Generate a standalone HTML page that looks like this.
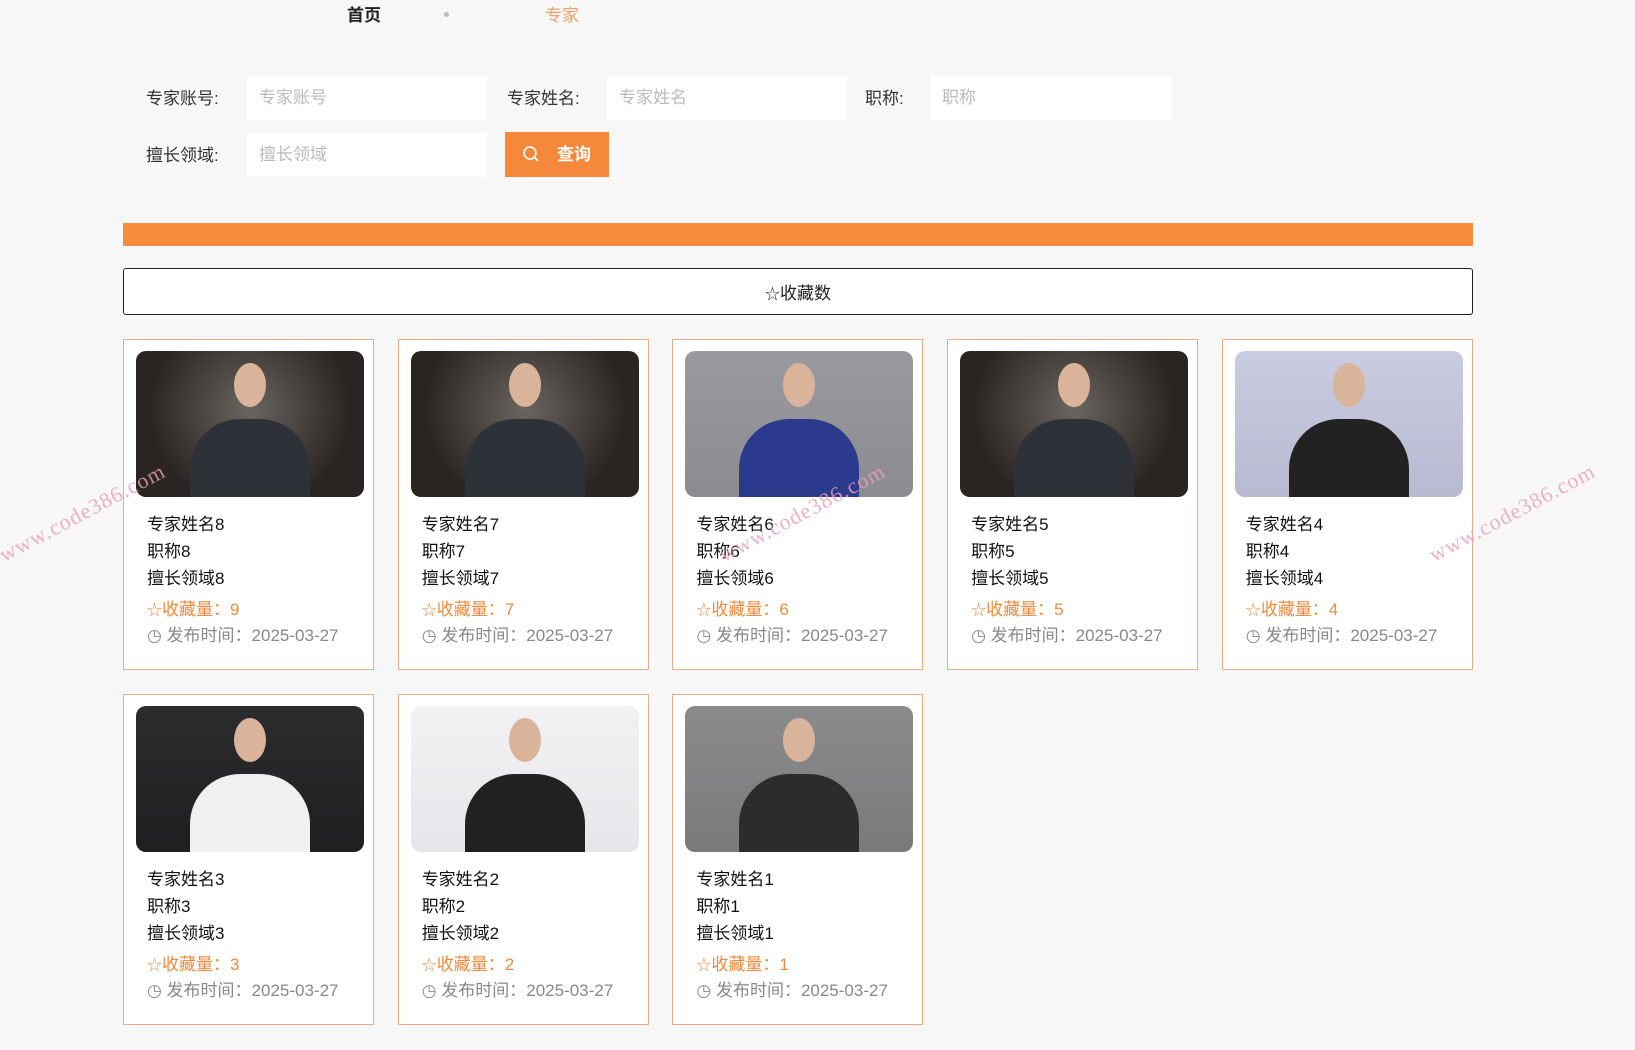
<!DOCTYPE html>
<html><head><meta charset="utf-8"><style>
*{box-sizing:border-box;margin:0;padding:0}
body{width:1635px;height:1050px;background:#f7f7f7;font-family:"Liberation Sans","Noto Sans CJK SC",sans-serif;position:relative;overflow:hidden;color:#222}
.abs{position:absolute}
.lbl{font-size:17px;color:#333}
.inp{background:#fff;height:44px;font-size:17px;color:#bbb;padding:7px 12px}
.card{position:absolute;width:251px;height:331px;background:#fff;border:1px solid #e9ad84}
.img{position:absolute;left:12px;top:11px;width:228px;height:146px;border-radius:10px;overflow:hidden}
.t{position:absolute;left:23px;font-size:17px;color:#111}
.o{color:#ee8a3e}.g{color:#888}
.wm{position:absolute;color:#e8a0b8;font-family:"Liberation Serif",serif;font-size:22px;transform:rotate(-28deg);opacity:.8;letter-spacing:1px}
</style></head><body>
<div class="abs" style="left:347px;top:1px;font-size:17px;font-weight:bold;color:#222">首页</div>
<div class="abs" style="left:444px;top:12px;width:5px;height:5px;border-radius:50%;background:#bbb"></div>
<div class="abs" style="left:545px;top:1px;font-size:17px;color:#f0a070">专家</div>

<div class="abs lbl" style="left:146px;top:84px">专家账号:</div>
<div class="abs inp" style="left:247px;top:76px;width:240px">专家账号</div>
<div class="abs lbl" style="left:507px;top:84px">专家姓名:</div>
<div class="abs inp" style="left:607px;top:76px;width:240px">专家姓名</div>
<div class="abs lbl" style="left:865px;top:84px">职称:</div>
<div class="abs inp" style="left:930px;top:76px;width:242px">职称</div>
<div class="abs lbl" style="left:146px;top:141px">擅长领域:</div>
<div class="abs inp" style="left:247px;top:133px;width:240px">擅长领域</div>
<div class="abs" style="left:505px;top:132px;width:104px;height:45px;background:#f5883a;color:#fff;font-size:17px;font-weight:bold;padding:8px 0 0 52px">查询
<svg class="abs" style="left:17px;top:13px" width="18" height="18" viewBox="0 0 18 18"><circle cx="8" cy="8" r="6" fill="none" stroke="#fff" stroke-width="1.6"/><path d="M12.5 12.5L16 16" stroke="#fff" stroke-width="1.6"/></svg></div>

<div class="abs" style="left:123px;top:223px;width:1350px;height:23px;background:#f98c3c"></div>
<div class="abs" style="left:123px;top:268px;width:1350px;height:47px;border:1px solid #222;border-radius:3px;background:#fff;text-align:center;font-size:17px;padding-top:10px;color:#222"><span style="font-size:15px">☆</span>收藏数</div>

<div id="cards"></div>
<div class="wm" style="left:-10px;top:500px">www.code386.com</div>
<div class="wm" style="left:710px;top:500px">www.code386.com</div>
<div class="wm" style="left:1420px;top:500px">www.code386.com</div>
<script>
var d=[[8,9,'d'],[7,7,'d'],[6,6,'g'],[5,5,'d'],[4,4,'l'],[3,3,'k'],[2,2,'w'],[1,1,'m']];
var bg={d:'radial-gradient(circle at 50% 40%,#6b6560,#2a2522 70%)',g:'linear-gradient(#9a999e,#8c8b90)',l:'linear-gradient(#c9cbe0,#b8bad2)',k:'linear-gradient(#2c2c2e,#1f1f20)',w:'linear-gradient(#f2f2f4,#e6e6ea)',m:'linear-gradient(#8b8b8e,#7a7a7d)'};
var fig={d:'#2e3238',g:'#2b3a8c',l:'#222',k:'#f0f0f0',w:'#222',m:'#2c2c2e'};
var h='';
d.forEach(function(c,i){var col=i%5,row=Math.floor(i/5);var x=123+col*274.7,y=row?694:339;
h+='<div class="card" style="left:'+x+'px;top:'+y+'px"><div class="img" style="background:'+bg[c[2]]+'">'+
'<div style="position:absolute;left:54px;top:68px;width:120px;height:90px;border-radius:50px 50px 0 0;background:'+fig[c[2]]+'"></div>'+
'<div style="position:absolute;left:98px;top:12px;width:32px;height:44px;border-radius:50%;background:#d9b49a"></div></div>'+
'<div class="t" style="top:170px">专家姓名'+c[0]+'</div><div class="t" style="top:197px">职称'+c[0]+'</div><div class="t" style="top:224px">擅长领域'+c[0]+'</div>'+
'<div class="t o" style="top:255px"><span style="font-size:15px">☆</span>收藏量：'+c[1]+'</div><div class="t g" style="top:281px">◷ 发布时间：2025-03-27</div></div>';});
document.getElementById('cards').innerHTML=h;
</script>
</body></html>
